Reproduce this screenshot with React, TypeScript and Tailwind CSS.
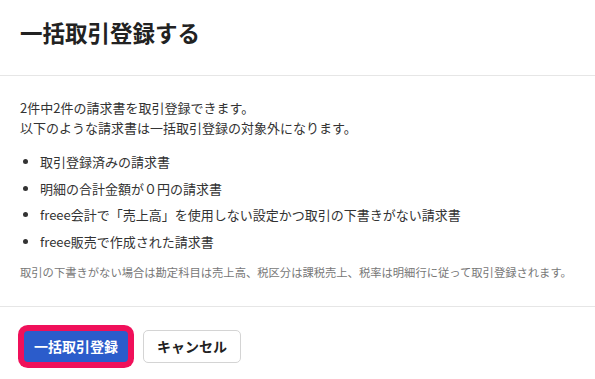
import React from "react";

const items = [
  "取引登録済みの請求書",
  "明細の合計金額が０円の請求書",
  "freee会計で「売上高」を使用しない設定かつ取引の下書きがない請求書",
  "freee販売で作成された請求書",
];

export default function App() {
  return (
    <div
      className="w-[595px] h-[379px] overflow-hidden bg-white text-[#333]"
      style={{ fontFamily: '"Noto Sans CJK JP", "Noto Sans", sans-serif' }}
    >
      <div className="h-[76px] border-b border-[#e6e6e6] flex items-center px-5">
        <h1 className="text-[22.5px] font-bold leading-[30px] text-[#222] -mt-[11px]">一括取引登録する</h1>
      </div>
      <div className="px-5 pt-[22px] pb-[26px] border-b border-[#e6e6e6]">
        <p className="text-[13px] leading-[20px]">
          2件中2件の請求書を取引登録できます。
          <br />
          以下のような請求書は一括取引登録の対象外になります。
        </p>
        <ul className="mt-[14px] flex flex-col gap-[6.5px] list-disc pl-[20px] text-[13px] leading-[20px]">
          {items.map((t) => (
            <li key={t}>{t}</li>
          ))}
        </ul>
        <p className="mt-[12.5px] text-[11.3px] leading-[16px] text-[#777] whitespace-nowrap">
          取引の下書きがない場合は勘定科目は売上高、税区分は課税売上、税率は明細行に従って取引登録されます。
        </p>
      </div>
      <div className="flex items-center pl-[24px] pt-[23px]">
        <button className="h-[31px] w-[104px] rounded-[4px] bg-[#2b5ccb] text-white text-[14px] font-bold ring-[6px] ring-[#f0105a]">
          一括取引登録
        </button>
        <button className="ml-[15px] h-[33px] w-[98px] rounded-[5px] border border-[#d4d4d4] bg-white text-[#222] text-[14px] font-bold">
          キャンセル
        </button>
      </div>
    </div>
  );
}
